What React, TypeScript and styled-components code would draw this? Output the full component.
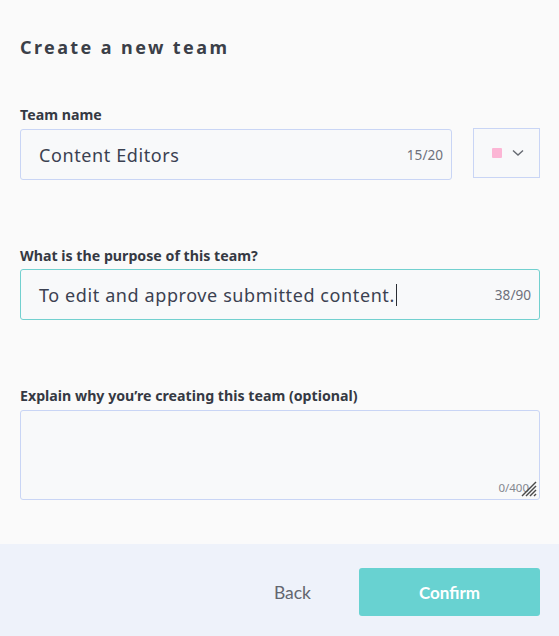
import React from "react";
import styled, { createGlobalStyle } from "styled-components";

const Global = createGlobalStyle`
  html, body { margin: 0; padding: 0; background: #fafafa; }
  * { box-sizing: border-box; }
`;

const Page = styled.div`
  width: 559px;
  height: 636px;
  display: flex;
  flex-direction: column;
  background: #fafafa;
  font-family: "Noto Sans", "Open Sans", sans-serif;
`;

const Body = styled.div`
  flex: 1;
  padding: 35px 19px 0 20px;
  display: flex;
  flex-direction: column;
`;

const Title = styled.h1`
  margin: 0;
  height: 24px;
  line-height: 24px;
  font-family: "Noto Sans", sans-serif;
  font-size: 18px;
  font-weight: 700;
  letter-spacing: 2.4px;
  color: #3b3f48;
`;

const Field = styled.div<{ $top: number }>`
  margin-top: ${(p) => p.$top}px;
  display: flex;
  flex-direction: column;
`;

const Label = styled.label<{ $gap: number }>`
  height: 18px;
  line-height: 18px;
  margin-bottom: ${(p) => p.$gap}px;
  font-family: "Noto Sans", sans-serif;
  font-size: 14.2px;
  font-weight: 700;
  color: #353943;
`;

const Row = styled.div`
  display: flex;
  gap: 21px;
  align-items: flex-start;
`;

const InputBox = styled.div<{ $focused?: boolean; $h: number }>`
  flex: 1 1 auto;
  height: ${(p) => p.$h}px;
  position: relative;
  display: flex;
  align-items: center;
  padding: 0 8px 0 18px;
  background: #f8f9fa;
  border: 1px solid ${(p) => (p.$focused ? "#72d0cf" : "#c9d5f5")};
  border-radius: 3px;
`;

const Value = styled.span`
  flex: 1;
  font-size: 18px;
  color: #3b4151;
  letter-spacing: 0.6px;
  display: flex;
  align-items: center;
`;

const Caret = styled.span`
  display: inline-block;
  width: 1px;
  height: 22px;
  margin-left: 1px;
  background: #2a2d33;
`;

const Counter = styled.span`
  font-size: 13.6px;
  color: #6d707a;
`;

const ColorSelect = styled.div`
  width: 67px;
  height: 50px;
  margin-top: -1px;
  border: 1px solid #c9d5f5;
  background: #f8f9fa;
  display: flex;
  align-items: center;
  justify-content: center;
  gap: 10px;
  padding-left: 2px;
`;

const Swatch = styled.span`
  width: 10px;
  height: 10px;
  border-radius: 1px;
  background: #fcb6d5;
`;

const TextArea = styled.div`
  height: 90px;
  position: relative;
  background: #f8f9fa;
  border: 1px solid #c9d5f5;
  border-radius: 3px;
`;

const AreaCounter = styled.span`
  position: absolute;
  right: 10px;
  bottom: 4px;
  font-size: 11.5px;
  color: #84878f;
`;

const Grip = styled.svg`
  position: absolute;
  right: 1px;
  bottom: 1px;
`;

const Footer = styled.div`
  height: 92px;
  background: #eef2fa;
  display: flex;
  align-items: center;
  justify-content: flex-end;
  padding: 4px 19px 0 0;
`;

const BackButton = styled.button`
  border: none;
  background: none;
  font-family: "Lato", sans-serif;
  font-size: 17.5px;
  color: #62666f;
  margin-right: 48px;
  padding: 0;
`;

const ConfirmButton = styled.button`
  width: 181px;
  height: 48px;
  border: none;
  border-radius: 3px;
  background: #68d2d1;
  color: #fff;
  font-family: "Lato", sans-serif;
  font-weight: 700;
  font-size: 17px;
`;

export default function App() {
  return (
    <Page>
      <Global />
      <Body>
        <Title>Create a new team</Title>
        <Field $top={47}>
          <Label $gap={5}>Team name</Label>
          <Row>
            <InputBox $h={51}>
              <Value>Content Editors</Value>
              <Counter>15/20</Counter>
            </InputBox>
            <ColorSelect>
              <Swatch />
              <svg width="12" height="8" viewBox="0 0 12 8">
                <path d="M1 1.5 L6 6 L11 1.5" fill="none" stroke="#666a72" strokeWidth="1.4" />
              </svg>
            </ColorSelect>
          </Row>
        </Field>
        <Field $top={67}>
          <Label $gap={4}>What is the purpose of this team?</Label>
          <InputBox $focused $h={51}>
            <Value>
              To edit and approve submitted content.
              <Caret />
            </Value>
            <Counter>38/90</Counter>
          </InputBox>
        </Field>
        <Field $top={67}>
          <Label $gap={5}>Explain why you’re creating this team (optional)</Label>
          <TextArea>
            <AreaCounter>0/400</AreaCounter>
            <Grip width="18" height="18" viewBox="0 0 18 18">
              <g stroke="#4a4a4a" strokeWidth="1.4">
                <line x1="16" y1="2" x2="2" y2="16" />
                <line x1="16" y1="6" x2="6" y2="16" />
                <line x1="16" y1="10" x2="10" y2="16" />
                <line x1="16" y1="14" x2="14" y2="16" />
              </g>
            </Grip>
          </TextArea>
        </Field>
      </Body>
      <Footer>
        <BackButton>Back</BackButton>
        <ConfirmButton>Confirm</ConfirmButton>
      </Footer>
    </Page>
  );
}
